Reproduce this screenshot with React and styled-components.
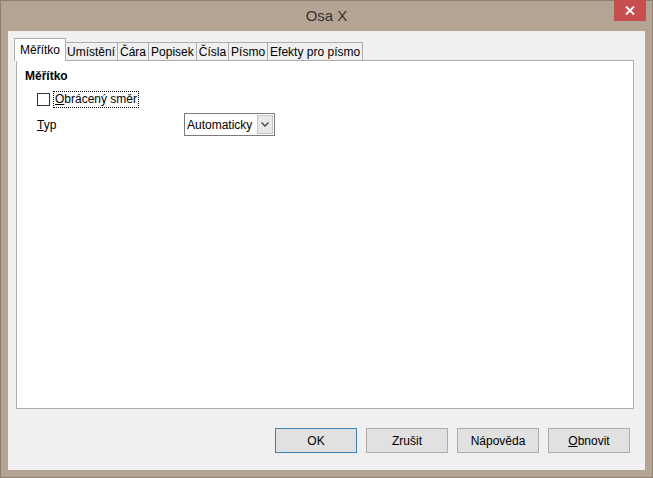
import React from "react";
import styled, { createGlobalStyle } from "styled-components";

const Global = createGlobalStyle`
  html, body { margin: 0; padding: 0; }
  body { width: 653px; height: 478px; overflow: hidden; font-family: "Liberation Sans", Arial, sans-serif; font-size: 12px; color: #000; }
  #root { width: 653px; height: 478px; }
`;

const Frame = styled.div`
  width: 653px;
  height: 478px;
  box-sizing: border-box;
  background: #b4a493;
  border: 1px solid #8f8170;
  display: flex;
  flex-direction: column;
`;

const TitleBar = styled.div`
  position: relative;
  height: 30px;
  display: flex;
  align-items: center;
  justify-content: center;
  font-size: 15px;
  color: #333333;
  font-family: "Liberation Sans", Arial, sans-serif;
  padding-bottom: 1px;
  box-sizing: border-box;
`;

const CloseButton = styled.div`
  position: absolute;
  top: -1px;
  right: 6px;
  width: 32px;
  height: 21px;
  background: #c7504f;
  display: flex;
  align-items: center;
  justify-content: center;
`;

const Client = styled.div`
  flex: 1;
  margin: 0 7px 7px 7px;
  background: #f0f0f0;
  display: flex;
  flex-direction: column;
  padding: 8px 11px 0 6px;
`;

const TabBar = styled.div`
  display: flex;
  align-items: flex-end;
  height: 22px;
  position: relative;
  z-index: 1;
  margin-bottom: -1px;
`;

const Tab = styled.div`
  box-sizing: border-box;
  height: ${p => (p.$active ? "23px" : "19px")};
  padding: 0 ${p => (p.$active ? "5px" : "2px")};
  margin-left: ${p => (p.$first ? "0" : "-1px")};
  border: 1px solid #adadad;
  border-bottom: ${p => (p.$active ? "none" : "1px solid #adadad")};
  background: ${p => (p.$active ? "#ffffff" : "#f0f0f0")};
  display: flex;
  align-items: ${p => (p.$active ? "flex-start" : "center")};
  padding-top: ${p => (p.$active ? "4px" : "0")};
  white-space: nowrap;
  position: relative;
  z-index: ${p => (p.$active ? 2 : 1)};
  ${p => (p.$active ? "margin-right: -1px;" : "")}
`;

const Panel = styled.div`
  box-sizing: border-box;
  flex: 0 0 349px;
  margin-left: 2px;
  background: #fff;
  border: 1px solid #adadad;
  padding: 8px 0 0 8px;
  display: flex;
  flex-direction: column;
`;

const SectionTitle = styled.div`
  font-weight: bold;
  height: 15px;
  line-height: 15px;
`;

const CheckRow = styled.div`
  display: flex;
  align-items: center;
  margin: 7px 0 0 12px;
  gap: 3px;
`;

const CheckBox = styled.div`
  width: 13px;
  height: 13px;
  box-sizing: border-box;
  border: 1px solid #333;
  background: #fff;
`;

const FocusLabel = styled.div`
  border: 1px dotted #000;
  padding: 0 1px;
  height: 15px;
  line-height: 14px;
`;

const U = styled.span`
  text-decoration: underline;
`;

const FieldRow = styled.div`
  display: flex;
  align-items: center;
  margin: 5px 0 0 12px;
`;

const FieldLabel = styled.div`
  width: 147px;
`;

const Select = styled.div`
  box-sizing: border-box;
  width: 91px;
  height: 23px;
  border: 1px solid #7a7a7a;
  display: flex;
  align-items: center;
  padding-left: 2px;
  justify-content: space-between;
`;

const SelectArrow = styled.div`
  width: 16px;
  height: 19px;
  margin-right: 1px;
  box-sizing: border-box;
  border: 1px solid #c4c4c4;
  background: #e8e8e8;
  display: flex;
  align-items: center;
  justify-content: center;
`;

const ButtonRow = styled.div`
  display: flex;
  justify-content: flex-end;
  gap: 9px;
  margin-top: 19px;
  margin-right: 4px;
`;

const Button = styled.div`
  box-sizing: border-box;
  width: 82px;
  height: 25px;
  border: 1px solid ${p => (p.$default ? "#3c7fb1" : "#adadad")};
  background: #e1e1e1;
  display: flex;
  align-items: center;
  justify-content: center;
`;

const tabs = ["Měřítko", "Umístění", "Čára", "Popisek", "Čísla", "Písmo", "Efekty pro písmo"];

export default function App() {
  return (
    <>
      <Global />
      <Frame>
        <TitleBar>
          Osa X
          <CloseButton>
            <svg width="10" height="9" viewBox="0 0 10 9">
              <path d="M1 0.5 L9 8.5 M9 0.5 L1 8.5" stroke="#fff" strokeWidth="1.8" />
            </svg>
          </CloseButton>
        </TitleBar>
        <Client>
          <TabBar>
            {tabs.map((t, i) => (
              <Tab key={t} $active={i === 0} $first={i === 0}>{t}</Tab>
            ))}
          </TabBar>
          <Panel>
            <SectionTitle>Měřítko</SectionTitle>
            <CheckRow>
              <CheckBox />
              <FocusLabel><U>O</U>brácený směr</FocusLabel>
            </CheckRow>
            <FieldRow>
              <FieldLabel><U>T</U>yp</FieldLabel>
              <Select>
                Automaticky
                <SelectArrow>
                  <svg width="8" height="5" viewBox="0 0 8 5">
                    <path d="M0.5 0.5 L4 4 L7.5 0.5" fill="none" stroke="#444" strokeWidth="1.4" />
                  </svg>
                </SelectArrow>
              </Select>
            </FieldRow>
          </Panel>
          <ButtonRow>
            <Button $default>OK</Button>
            <Button>Zrušit</Button>
            <Button>Nápověda</Button>
            <Button><span><U>O</U>bnovit</span></Button>
          </ButtonRow>
        </Client>
      </Frame>
    </>
  );
}
